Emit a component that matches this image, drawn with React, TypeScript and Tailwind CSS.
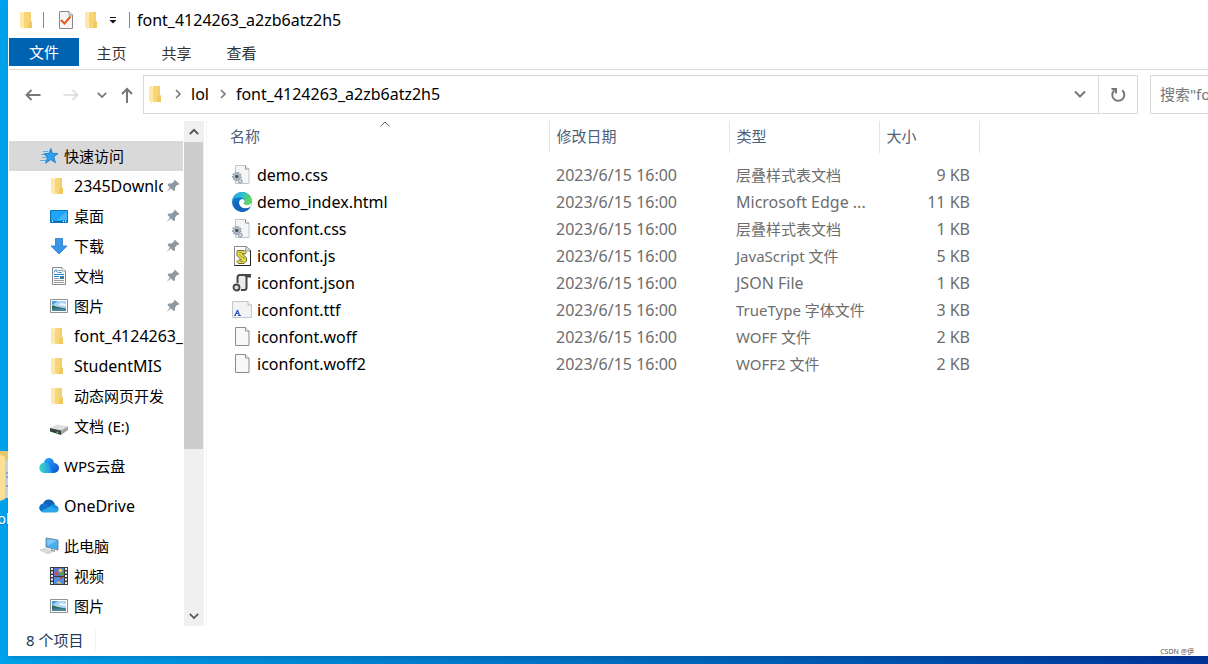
import type { ReactNode } from 'react';

type IconProps = { className?: string };

function FolderIcon({ className = 'w-5 h-5' }: IconProps) {
    return (
        <svg viewBox="0 0 20 20" className={className} aria-hidden="true">
            <path d="M6 2h7v9l1 1v6H6z" fill="#f7d679" />
            <path d="M10.500 2H13v9h-2.500z" fill="#f4cf72" />
            <path d="M10.500 12l3.500-0.500V18h-4z" fill="#f0c860" />
            <path d="M2 2h2.500L6 3.500v12L5 19.500 2 16.500z" fill="#ffe8a6" />
        </svg>
    );
}

function PropertiesIcon() {
    return (
        <svg viewBox="0 0 16 20" className="w-4 h-5" aria-hidden="true">
            <path d="M1.500 1.500h9.500l3.500 3.500v13.500h-13z" fill="#f5f5f5" stroke="#8a8a8a" />
            <path d="M11 1.500v3.500h3.500" fill="#fff" stroke="#8a8a8a" />
            <path d="M3 10l3.500 3.500 6-7" fill="none" stroke="#e8591b" strokeWidth="2" />
        </svg>
    );
}

function CustomizeIcon() {
    return (
        <svg viewBox="0 0 8 8" className="w-2 h-2" aria-hidden="true">
            <path d="M1 1.500h6" stroke="#111" />
            <path d="M0.500 4h7L4 7.500z" fill="#111" />
        </svg>
    );
}

function BackIcon() {
    return (
        <svg viewBox="0 0 16 16" className="w-4 h-4" fill="none" stroke="currentColor" strokeWidth="1.8" aria-hidden="true">
            <path d="M15.500 8H1.500M6.500 3l-5 5 5 5" />
        </svg>
    );
}

function ForwardIcon() {
    return (
        <svg viewBox="0 0 16 16" className="w-4 h-4" fill="none" stroke="currentColor" strokeWidth="1.6" aria-hidden="true">
            <path d="M0.500 8h14M9.500 3l5 5-5 5" />
        </svg>
    );
}

function UpIcon() {
    return (
        <svg viewBox="0 0 16 16" className="w-4 h-4" fill="none" stroke="currentColor" strokeWidth="2" aria-hidden="true">
            <path d="M8 16V2M3 7l5-5 5 5" />
        </svg>
    );
}

function ChevronDown({ className = 'w-3 h-3' }: IconProps) {
    return (
        <svg viewBox="0 0 12 12" className={className} fill="none" stroke="currentColor" strokeWidth="2" aria-hidden="true">
            <path d="M1 3.500l5 5 5-5" />
        </svg>
    );
}

function ChevronUp({ className = 'w-3 h-3' }: IconProps) {
    return (
        <svg viewBox="0 0 12 12" className={className} fill="none" stroke="currentColor" strokeWidth="2.4" aria-hidden="true">
            <path d="M1 8.500l5-5 5 5" />
        </svg>
    );
}

function ChevronRight() {
    return (
        <svg viewBox="0 0 8 10" className="w-2 h-2.5 text-[#777]" fill="none" stroke="currentColor" strokeWidth="1.6" aria-hidden="true">
            <path d="M2 1l4 4-4 4" />
        </svg>
    );
}

function RefreshIcon() {
    return (
        <svg viewBox="0 0 16 16" className="w-4 h-4" fill="none" stroke="currentColor" strokeWidth="2" aria-hidden="true">
            <path d="M12.200 3.300A6 6 0 1 1 4.500 3.200" />
            <path d="M1.500 2h4.500v4.500" />
        </svg>
    );
}

function PinIcon() {
    return (
        <svg viewBox="0 0 14 14" className="w-3.5 h-3.5 shrink-0" aria-hidden="true">
            <path d="M8.500 0.500l5 4.500-1.500 1-1 0-2 2.500 0 3-1.500 0.500-2.500-2.500-4.500 3.500 3.500-4.500-2.500-2.500 1-1.500h3l2.500-2z" fill="#8d9aa3" />
        </svg>
    );
}

function StarIcon() {
    return (
        <svg viewBox="0 0 20 18" className="w-5 h-[18px]" aria-hidden="true">
            <path d="M4 4.500h5M2 7.500h6M3 10.500h5M1 13.500h6" stroke="#5aaee8" />
            <path d="M11.800 1.500l1.800 4.900 5.400 0.100-4.200 3.500 1.700 5.800-4.700-3.200-5.300 3.700 2-5.800L5 6.700l5-0.300z" fill="#2c9ff0" stroke="#1677c4" strokeWidth="0.800" />
        </svg>
    );
}

function DesktopIcon() {
    return (
        <svg viewBox="0 0 20 20" className="w-5 h-5" aria-hidden="true">
            <path d="M1.500 4.500h17v12h-17z" fill="#1ea5fb" stroke="#0b76bd" />
            <path d="M18 5v9L8 14z" fill="#45b5fd" />
            <path d="M2 15.500h16" stroke="#0d6aa9" />
            <path d="M3 15.500h1M14 15.500h1M16 15.500h1" stroke="#fff" />
        </svg>
    );
}

function DownloadIcon() {
    return (
        <svg viewBox="0 0 20 20" className="w-5 h-5" aria-hidden="true">
            <path d="M6.500 2.500h7V10h4.500L10 18 2 10h4.500z" fill="#3a96e8" stroke="#2379c8" strokeWidth="0.800" />
        </svg>
    );
}

function DocumentIcon() {
    return (
        <svg viewBox="0 0 20 20" className="w-5 h-5" aria-hidden="true">
            <path d="M3.500 1.500h9.500l3.500 3.500v13.500h-13z" fill="#fafafa" stroke="#8a8a8a" />
            <path d="M13 1.500v3.500h3.500" fill="#fff" stroke="#8a8a8a" strokeWidth="0.800" />
            <path d="M5 6.500l1.500-2.500h1l1 2.500M9.500 4.500h2M9.500 6.500h3M5 8.500h10M5 10.500h5" fill="none" stroke="#2288cc" />
            <path d="M11 10h4v3h-4z" fill="#3e7a9a" />
            <path d="M5 12.500h5M5 14.500h10M5 16.500h10" stroke="#9a9a9a" />
        </svg>
    );
}

function PictureIcon() {
    return (
        <svg viewBox="0 0 20 20" className="w-5 h-5" aria-hidden="true">
            <path d="M1.500 3.500h17v13h-17z" fill="#fff" stroke="#909090" />
            <path d="M3 5h14v10H3z" fill="#a9d3f5" />
            <path d="M3 5h6l-6 4z" fill="#4c9be0" />
            <path d="M9 9l3-2 5 1v2z" fill="#eef7fd" />
            <path d="M3 9.500c3 0 5 2 14 3V13H3z" fill="#35695a" />
            <path d="M3 12.500h14V15H3z" fill="#4b84a0" />
        </svg>
    );
}

function DriveIcon() {
    return (
        <svg viewBox="0 0 20 20" className="w-5 h-5" aria-hidden="true">
            <path d="M1 12l7-3.500 11 2-7 4z" fill="#dedede" />
            <path d="M1 12l11 2.500V19L1 15.500z" fill="#3c3f41" />
            <path d="M12 14.500l7-4V14l-7 5z" fill="#a3a3a3" />
            <path d="M7.500 16.300h2" stroke="#3be03b" strokeWidth="1.400" />
        </svg>
    );
}

function WpsCloudIcon() {
    return (
        <svg viewBox="0 0 20 16" className="w-5 h-4" aria-hidden="true">
            <defs>
                <linearGradient id="wpsRight" x1="0" y1="0" x2="1" y2="1">
                    <stop offset="0" stopColor="#2ba9fb" />
                    <stop offset="1" stopColor="#0b4fd8" />
                </linearGradient>
                <linearGradient id="wpsLeft" x1="0" y1="0" x2="1" y2="0">
                    <stop offset="0" stopColor="#3ddcc4" />
                    <stop offset="1" stopColor="#1a8cf5" />
                </linearGradient>
            </defs>
            <path d="M5 5a5 5 0 0 1 10 0 5 5 0 0 1 0 10H9z" fill="url(#wpsRight)" />
            <path d="M5.500 4.500c3 0 5 2 5.500 5l2.500 5.500H5.500a5.200 5.200 0 0 1 0-10.500z" fill="url(#wpsLeft)" />
        </svg>
    );
}

function OneDriveIcon() {
    return (
        <svg viewBox="0 0 20 14" className="w-5 h-3.5" aria-hidden="true">
            <path d="M4 5a6 6 0 0 1 11-1.500l1 2L9 10 2 7z" fill="#0f62b8" />
            <path d="M5 4.500c3-0.500 5 2 7 3.500l-7 5H4a4.200 4.200 0 0 1 1-8.500z" fill="#1173d0" />
            <path d="M11 7.500c2-3 5-2.500 6-1a4 4 0 0 1 2.500 4.500L14 11z" fill="#1490df" />
            <path d="M2 12l9.500-4.500 8 3.500a3 3 0 0 1-2.500 2.500H4.500c-1 0-2-0.500-2.500-1.500z" fill="#29a9ea" />
        </svg>
    );
}

function ComputerIcon() {
    return (
        <svg viewBox="0 0 20 18" className="w-5 h-[18px]" aria-hidden="true">
            <path d="M7 1l12 2v10l-12-3z" fill="#46aef0" stroke="#6b7a86" strokeWidth="0.800" />
            <path d="M8 2l10 1.600L8.500 9z" fill="#7ccaf9" />
            <path d="M12 12l4 1v2l-4-1z" fill="#9fa8af" />
            <path d="M1 13l5-1.500 8 3-5 2.500z" fill="#d9dee2" stroke="#aab1b6" strokeWidth="0.500" />
        </svg>
    );
}

function VideoIcon() {
    return (
        <svg viewBox="0 0 20 20" className="w-5 h-5" aria-hidden="true">
            <path d="M1 1h18v18H1z" fill="#3b3b3b" />
            <path d="M3 2v17M17 2v17" stroke="#eee" strokeWidth="2" strokeDasharray="2 1.500" />
            <path d="M5 2h10v8H5z" fill="#5577d8" />
            <path d="M5 11h10v7H5z" fill="#4e8ee8" />
            <circle cx="11.500" cy="4.500" r="2" fill="#e8c53c" />
            <circle cx="7.500" cy="7.500" r="2" fill="#d9514c" />
            <circle cx="12.500" cy="8" r="1.800" fill="#55a63f" />
            <path d="M10 11l4 0-2 3z" fill="#d8412f" />
            <path d="M7 17l3-2 3 3z" fill="#e8c53c" />
        </svg>
    );
}

function CssFileIcon() {
    return (
        <svg viewBox="0 0 20 20" className="w-5 h-5" aria-hidden="true">
            <path d="M3.500 0.500h10l3.500 3.500v14.500H3.500z" fill="#f4f5f6" stroke="#c2c4c6" />
            <path d="M13.500 0.500V4H17" fill="#fff" stroke="#8f9193" />
            <circle cx="4.800" cy="11.500" r="3.800" fill="#bcc6ce" stroke="#8e9aa4" strokeWidth="1.800" strokeDasharray="1.600 1" />
            <circle cx="4.800" cy="11.500" r="1.800" fill="#46525c" />
            <circle cx="8.200" cy="16" r="2.200" fill="#a9b5bf" stroke="#8e9aa4" strokeDasharray="1 1" />
            <circle cx="8.200" cy="16" r="0.800" fill="#fff" />
        </svg>
    );
}

function EdgeIcon() {
    return (
        <svg viewBox="0 0 20 20" className="w-5 h-5" aria-hidden="true">
            <defs>
                <linearGradient id="edgeTop" x1="0" y1="0" x2="1" y2="0.300">
                    <stop offset="0" stopColor="#1f9de0" />
                    <stop offset="0.500" stopColor="#29bed3" />
                    <stop offset="1" stopColor="#63d957" />
                </linearGradient>
                <linearGradient id="edgeBody" x1="0" y1="0" x2="0.800" y2="1">
                    <stop offset="0" stopColor="#1382d8" />
                    <stop offset="1" stopColor="#0d57a8" />
                </linearGradient>
            </defs>
            <circle cx="10" cy="10" r="10" fill="url(#edgeBody)" />
            <path d="M0 9.500C0.500 4 5 0 10 0c6 0 10 4.500 10 8.500 0 3-2.300 4.700-5 4.700-2.300 0-3-1-3-1.700 0-0.600 0.800-0.800 0.800-2.200C12.800 7 10 5.500 7 5.500 3.500 5.500 1 7 0 9.500z" fill="url(#edgeTop)" />
            <path d="M7.200 9.500c-1 3.500 1.800 7 6.300 7 2 0 3.500-0.600 5-1.700l1.500-5.300c-0.500 2.500-2.500 3.700-5 3.700-2.300 0-3.300-1-3.300-1.900 0-0.600 1.100-0.800 1.100-2 0-1.300-1.300-2.300-2.600-2.300-1.400 0-2.600 1-3 2.500z" fill="#fff" />
            <path d="M7.200 9.500c-1 3.500 1.800 7 6.300 7 2 0 3.500-0.600 5-1.700-1.500 3-4.500 5.200-8.500 5.200-4-1-6.500-4-6.500-7 0-2 1.500-3.300 3.700-3.500z" fill="#1267bd" />
            <path d="M12.500 11.500c0 1 1 1.700 2.500 1.700 2.500 0 4.400-1.400 5-3.700l-0.800 4.500-4.200 1c-2-0.500-3-2-2.500-3.500z" fill="#fff" />
        </svg>
    );
}

function JsFileIcon() {
    return (
        <svg viewBox="0 0 20 20" className="w-5 h-5" aria-hidden="true">
            <path d="M2.500 0.500h12l4 4v15h-16z" fill="#fff" stroke="#8a8a8a" />
            <path d="M18.500 4v15.500h-16" fill="none" stroke="#222" />
            <path d="M14 1l-0.500 4h5" fill="#ddd" stroke="#777" strokeWidth="0.800" />
            <path d="M5.500 4.500h6.500l2 2-1 1.500-3-0.500 4.500 4.500v3l-2.500 2.500H6.500l-1.500-2 1.500-1.500h3L5 9.500V6z" fill="#e6df45" stroke="#6f6c3c" />
            <path d="M7 6.500h3M7 8.500l5 4M8 15.500h4M11 11l2 1.500" stroke="#8d8a48" strokeWidth="0.800" />
        </svg>
    );
}

function JsonFileIcon() {
    return (
        <svg viewBox="0 0 20 20" className="w-5 h-5" aria-hidden="true">
            <path d="M6 3h8v12l-2 2H8V11H5z" fill="#ececec" />
            <path d="M5.500 10V4.500C5.500 3 6.500 2 8 2h10M14.500 2.500v12.500c0 1.500-1 2-2.500 2H9" fill="none" stroke="#454545" strokeWidth="2" />
            <path d="M8 1h11v3.500h-4" fill="#454545" />
            <circle cx="4.500" cy="14.500" r="3" fill="#ddd" stroke="#454545" strokeWidth="1.800" />
        </svg>
    );
}

function FontFileIcon() {
    return (
        <svg viewBox="0 0 20 20" className="w-5 h-5" aria-hidden="true">
            <path d="M0.500 1.500h15.500l3.500 3.500v12.500h-19z" fill="#f2f3f4" stroke="#c5c7c9" />
            <path d="M16 1.500v3.500h3.500" fill="#fff" stroke="#b5b7b9" />
            <path d="M2 15.500h2M6 15.500h3M3 15.500l2.500-5.500M5.500 10l2 5.500M4.500 13.500h2.500" fill="none" stroke="#3156c4" strokeWidth="1.200" />
        </svg>
    );
}

function BlankFileIcon() {
    return (
        <svg viewBox="0 0 20 20" className="w-5 h-5" aria-hidden="true">
            <path d="M3.500 0.500h10l3.500 3.500v14.500h-13.500z" fill="#f8f8f8" stroke="#8c8c8c" />
            <path d="M13.500 0.500v3.500h3.500" fill="#fff" stroke="#8c8c8c" />
        </svg>
    );
}

type QuickItem = { label: string; icon: ReactNode; pinned?: boolean };

const quickAccess: QuickItem[] = [
    { label: '2345Downloads', icon: <FolderIcon />, pinned: true },
    { label: '桌面', icon: <DesktopIcon />, pinned: true },
    { label: '下载', icon: <DownloadIcon />, pinned: true },
    { label: '文档', icon: <DocumentIcon />, pinned: true },
    { label: '图片', icon: <PictureIcon />, pinned: true },
    { label: 'font_4124263_a2zb6atz2h5', icon: <FolderIcon /> },
    { label: 'StudentMIS', icon: <FolderIcon /> },
    { label: '动态网页开发', icon: <FolderIcon /> },
    { label: '文档 (E:)', icon: <DriveIcon /> },
];

const computerItems: QuickItem[] = [
    { label: '视频', icon: <VideoIcon /> },
    { label: '图片', icon: <PictureIcon /> },
];

const files = [
    { name: 'demo.css', type: '层叠样式表文档', size: '9 KB', icon: <CssFileIcon /> },
    { name: 'demo_index.html', type: 'Microsoft Edge ...', size: '11 KB', icon: <EdgeIcon /> },
    { name: 'iconfont.css', type: '层叠样式表文档', size: '1 KB', icon: <CssFileIcon /> },
    { name: 'iconfont.js', type: 'JavaScript 文件', size: '5 KB', icon: <JsFileIcon /> },
    { name: 'iconfont.json', type: 'JSON File', size: '1 KB', icon: <JsonFileIcon /> },
    { name: 'iconfont.ttf', type: 'TrueType 字体文件', size: '3 KB', icon: <FontFileIcon /> },
    { name: 'iconfont.woff', type: 'WOFF 文件', size: '2 KB', icon: <BlankFileIcon /> },
    { name: 'iconfont.woff2', type: 'WOFF2 文件', size: '2 KB', icon: <BlankFileIcon /> },
];

// Chinese labels run a pixel smaller than latin ones
const textSize = (label: string) => (/[\u4e00-\u9fff]/.test(label) ? 'text-[15px]' : 'text-base');

function TreeItem({ item }: { item: QuickItem }) {
    return (
        <a href="#" className="flex items-center h-[30px] pl-10 text-black">
            <span className="shrink-0">{item.icon}</span>
            <span className={`ml-[5px] flex-1 min-w-0 overflow-hidden whitespace-nowrap leading-5 ${textSize(item.label)}`}>{item.label}</span>
            {item.pinned && <span className="pl-[3px] pr-[3px] shrink-0"><PinIcon /></span>}
        </a>
    );
}

function TreeRoot({ label, icon, active = false }: { label: string; icon: ReactNode; active?: boolean }) {
    return (
        <a href="#" className={`flex items-center h-[30px] pl-[30px] text-black ${active ? 'bg-[#d9d9d9]' : ''}`}>
            <span className="w-5 shrink-0">{icon}</span>
            <span className={`ml-[5px] whitespace-nowrap leading-5 ${textSize(label)}`}>{label}</span>
        </a>
    );
}

function TitleBar() {
    return (
        <div className="flex items-center h-[38px] pt-px pl-[9px]">
            <FolderIcon />
            <span className="w-px h-4 ml-[5px] bg-[#8a8a8a]" />
            <button type="button" aria-label="属性" className="ml-[14px]"><PropertiesIcon /></button>
            <button type="button" aria-label="新建文件夹" className="ml-[9px]"><FolderIcon /></button>
            <button type="button" aria-label="自定义快速访问工具栏" className="ml-[6px] mr-[12px]"><CustomizeIcon /></button>
            <span className="w-px h-4 mr-[7px] bg-[#8a8a8a]" />
            <h1 className="text-black">font_4124263_a2zb6atz2h5</h1>
        </div>
    );
}

function Ribbon() {
    return (
        <nav className="flex h-8 border-b border-[#dadbdc] text-[15px] text-[#333]">
            <button type="button" className="w-[70px] h-7 bg-[#0063b1] text-white">文件</button>
            <button type="button" className="w-[65px] h-7 pt-0.5">主页</button>
            <button type="button" className="w-[65px] h-7 pt-0.5">共享</button>
            <button type="button" className="w-[65px] h-7 pt-0.5">查看</button>
        </nav>
    );
}

function AddressBar() {
    return (
        <div className="flex items-center h-[49px] pl-4 overflow-hidden">
            <button type="button" aria-label="后退" className="text-[#777]"><BackIcon /></button>
            <button type="button" aria-label="前进" className="ml-[22px] text-[#d9d9d9]"><ForwardIcon /></button>
            <button type="button" aria-label="最近浏览的位置" className="ml-[18px] text-[#777]"><ChevronDown className="w-2.5 h-2.5" /></button>
            <button type="button" aria-label="上移" className="ml-3 text-[#777]"><UpIcon /></button>
            <div className="flex items-center flex-1 h-[39px] pb-px ml-2 border border-[#d9d9d9]">
                <span className="ml-[3px]"><FolderIcon /></span>
                <span className="ml-[7px]"><ChevronRight /></span>
                <a href="#" className="ml-[9px] text-black">lol</a>
                <span className="ml-2.5"><ChevronRight /></span>
                <a href="#" className="ml-[9px] text-black">font_4124263_a2zb6atz2h5</a>
                <button type="button" aria-label="以前的位置" className="ml-auto mr-3 text-[#777]"><ChevronDown /></button>
                <button type="button" aria-label="刷新" className="flex items-center justify-center w-[39px] h-[37px] -mb-px border-l border-[#d9d9d9] text-[#777]"><RefreshIcon /></button>
            </div>
            <div className="w-[58px] h-[39px] ml-3 overflow-hidden">
                <input
                    type="text"
                    aria-label="搜索"
                    placeholder='搜索"font_4124263_a2zb6atz2h5"'
                    className="w-72 h-full pl-[9px] pb-0.5 border border-[#d9d9d9] text-[15px] placeholder:text-[#777] outline-none"
                />
            </div>
        </div>
    );
}

function Sidebar() {
    return (
        <aside className="flex w-[195px] h-[505px] shrink-0">
            <div className="w-[174px] pt-5 overflow-hidden">
                <TreeRoot label="快速访问" icon={<StarIcon />} active />
                {quickAccess.map((item) => <TreeItem key={item.label} item={item} />)}
                <div className="mt-2.5"><TreeRoot label="WPS云盘" icon={<WpsCloudIcon />} /></div>
                <div className="mt-2.5"><TreeRoot label="OneDrive" icon={<OneDriveIcon />} /></div>
                <div className="mt-2.5"><TreeRoot label="此电脑" icon={<ComputerIcon />} /></div>
                {computerItems.map((item) => <TreeItem key={item.label} item={item} />)}
            </div>
            <div className="flex flex-col w-5 ml-px bg-[#f0f0f0] text-[#555]">
                <button type="button" aria-label="向上滚动" className="flex items-center justify-center h-[21px]"><ChevronUp className="w-2.5 h-2.5" /></button>
                <div className="h-[307px] mr-px bg-[#cdcdcd]" />
                <button type="button" aria-label="向下滚动" className="flex items-center justify-center h-[21px] mt-auto"><ChevronDown className="w-2.5 h-2.5" /></button>
            </div>
        </aside>
    );
}

function FileTable() {
    return (
        <div className="flex-1 min-w-0 pl-[14px] ml-[2px] border-l border-[#f5f5f5]">
            <table className="table-fixed w-[758px] border-collapse text-left">
                <thead className="text-[15px] text-[#4c607a]">
                    <tr className="h-8">
                        <th className="relative w-[328px] pl-[9px] pb-0.5 font-normal border-r border-[#e5e5e5]">
                            名称
                            <span className="absolute top-0 left-1/2 -translate-x-1/2 text-[#666]">
                                <svg viewBox="0 0 10 6" className="w-2.5 h-1.5" fill="none" stroke="currentColor" aria-hidden="true"><path d="M0.500 5.500L5 1l4.500 4.500" /></svg>
                            </span>
                        </th>
                        <th className="w-[180px] pl-[7px] pb-0.5 font-normal border-r border-[#e5e5e5]">修改日期</th>
                        <th className="w-[150px] pl-[7px] pb-0.5 font-normal border-r border-[#e5e5e5]">类型</th>
                        <th className="w-[100px] pl-[7px] pb-0.5 font-normal border-r border-[#e5e5e5]">大小</th>
                    </tr>
                </thead>
                <tbody className="text-[#6d6d6d]">
                    <tr className="h-2" />
                    {files.map((file) => (
                        <tr key={file.name} className="h-[27px] whitespace-nowrap">
                            <td className="pl-[11px] text-black">
                                <a href="#" className="flex items-center gap-[5px]">{file.icon}{file.name}</a>
                            </td>
                            <td className="pl-[7px]">2023/6/15 16:00</td>
                            <td className={`pl-[7px] leading-5 ${textSize(file.type)}`}>{file.type}</td>
                            <td className="pr-[9px] text-right">{file.size}</td>
                        </tr>
                    ))}
                </tbody>
            </table>
        </div>
    );
}

export default function App() {
    return (
        <div className="relative min-h-screen pl-2 pb-2 flex overflow-hidden bg-linear-to-r from-[#00a2ed] via-[#006fc4] to-[#00349c] text-base leading-5 font-['Noto_Sans','Noto_Sans_CJK_SC',sans-serif]">
            {/* desktop shortcut behind the window */}
            <div className="absolute left-0 top-[451px] w-2 h-20 overflow-hidden">
                <svg viewBox="0 0 8 50" className="w-2 h-[50px]" aria-hidden="true">
                    <path d="M0 0h8v10H0z" fill="#e8c66d" />
                    <path d="M0 3l5 3v42l-5 2z" fill="#fbdf94" />
                    <path d="M5 9h3v38H5z" fill="#c5d3dd" />
                    <path d="M6 22h2M6 26h2M6 35h2" stroke="#4b7ea0" />
                </svg>
                <span className="block -ml-1.5 mt-2 text-sm leading-5 text-white text-shadow-sm">lol</span>
            </div>
            <main className="flex flex-col flex-1 min-w-0 pl-px bg-white shadow-md">
                <TitleBar />
                <Ribbon />
                <AddressBar />
                <div className="flex pt-0.5">
                    <Sidebar />
                    <FileTable />
                </div>
                <footer className="flex items-center flex-1 pl-[17px] text-[15px] text-[#1e395b]">
                    <span className="pr-3 mb-0.5 border-r border-[#f0f0f0]">8 个项目</span>
                    <span className="self-end ml-auto mr-[14px] text-[7px] leading-2 text-[#555]">CSDN @伊</span>
                </footer>
            </main>
        </div>
    );
}
